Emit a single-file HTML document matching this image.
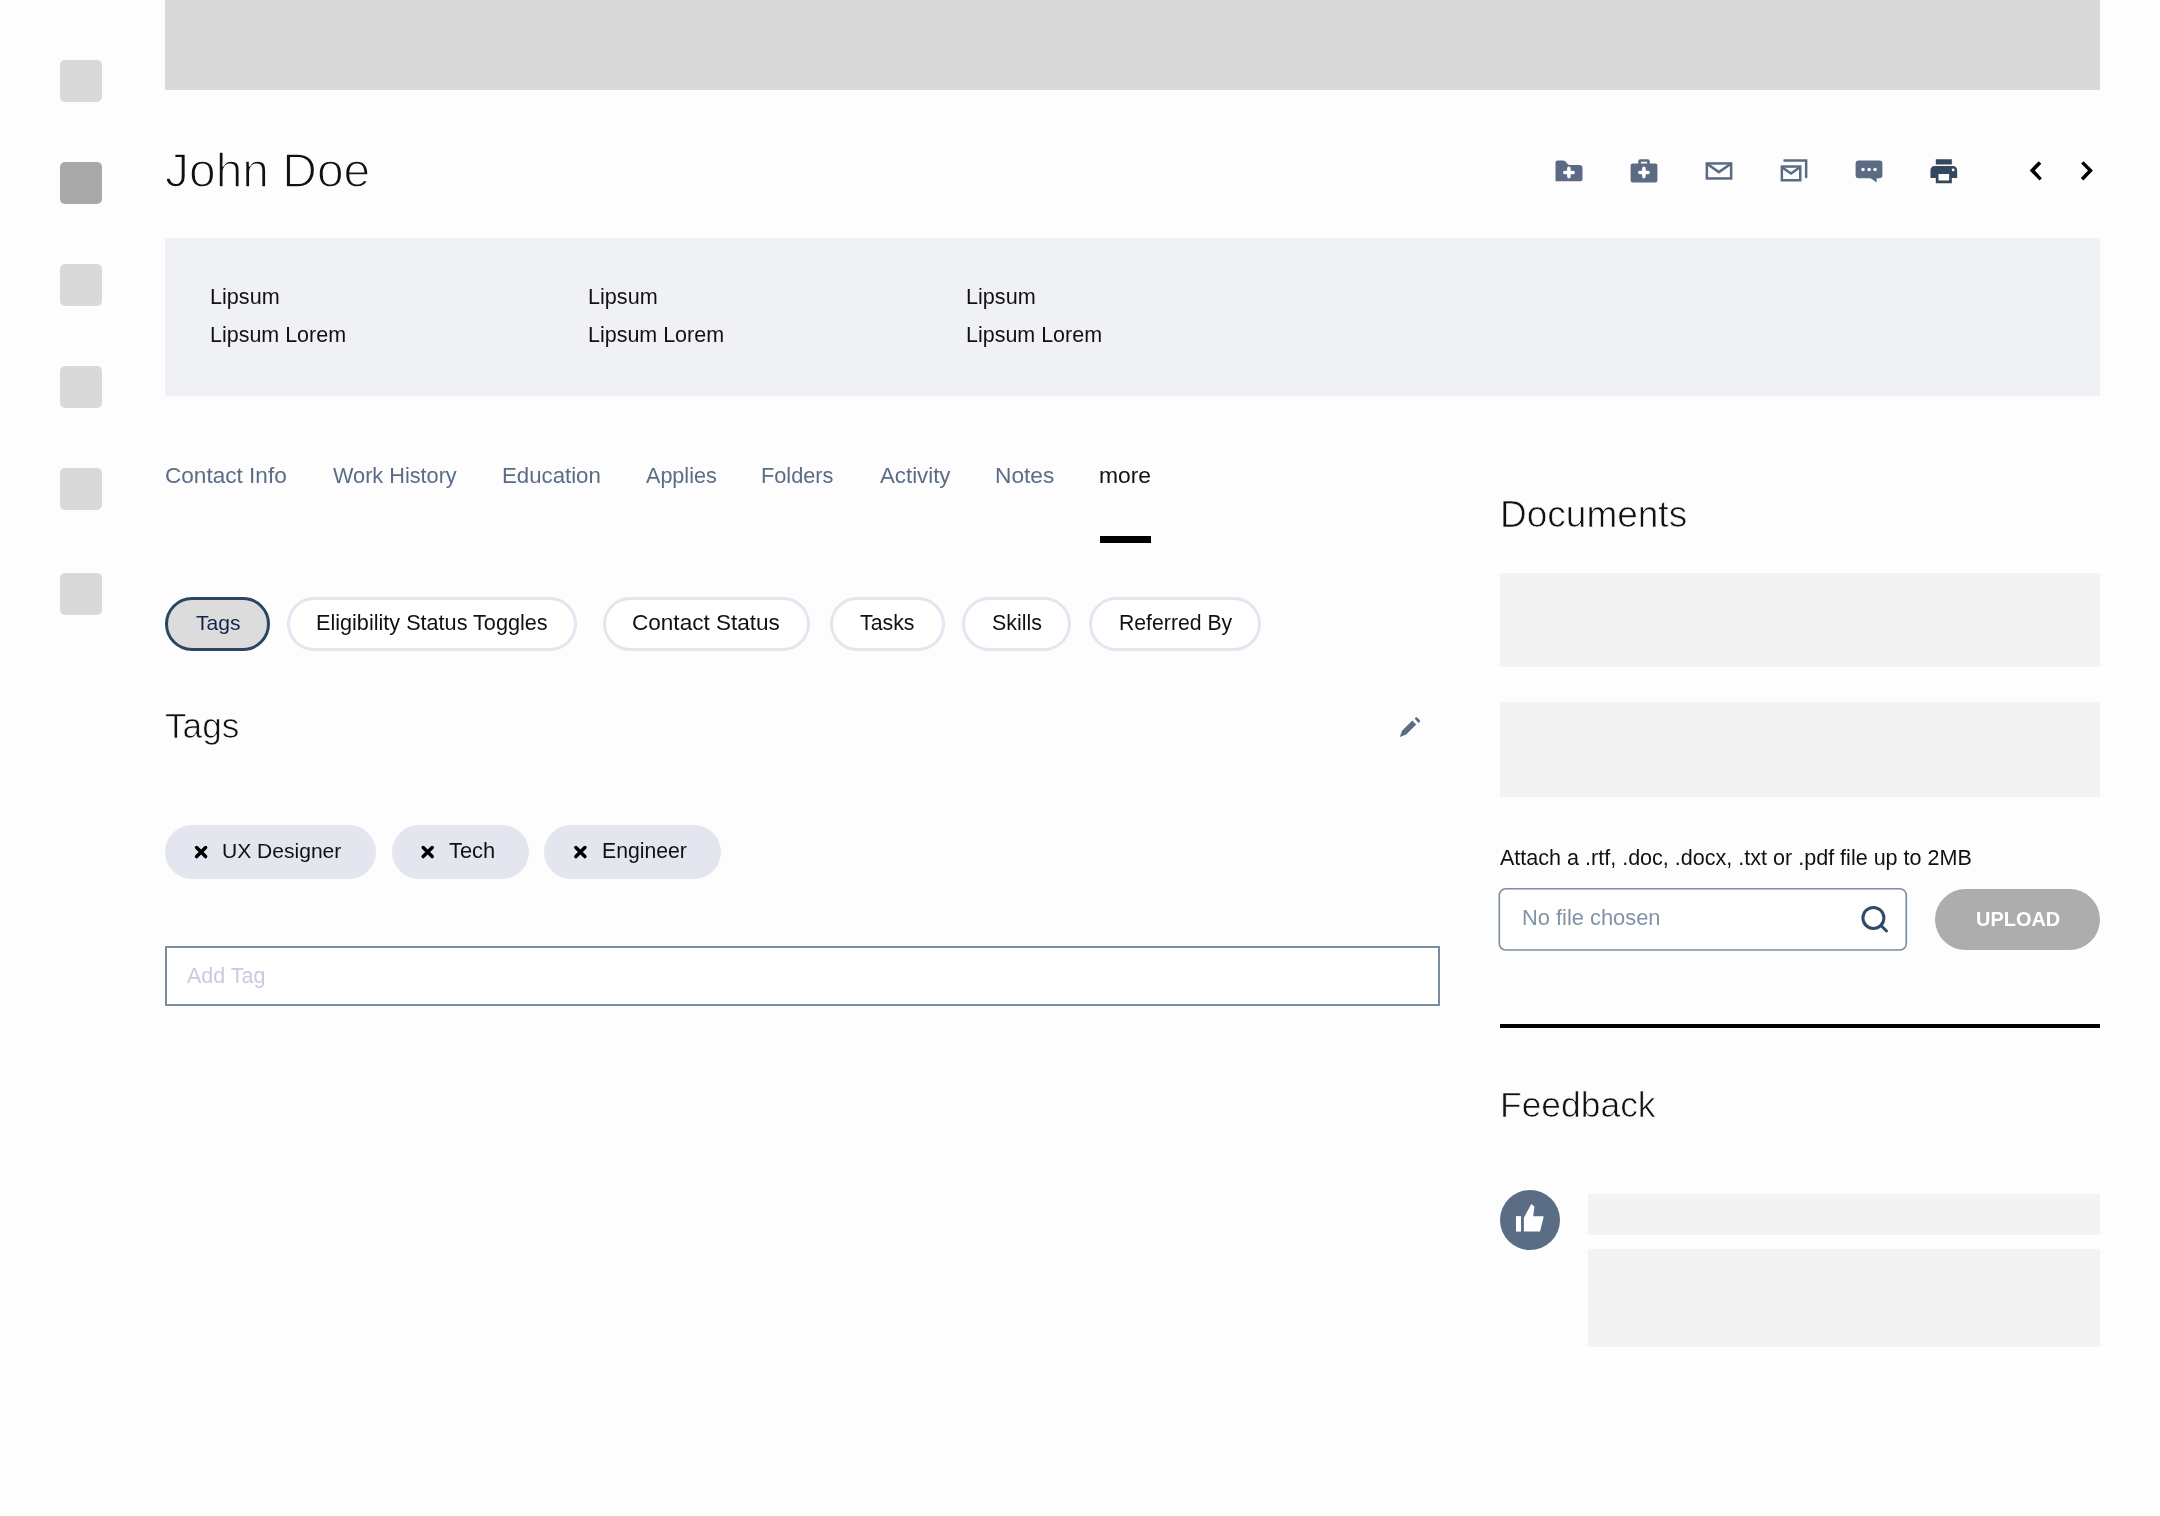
<!DOCTYPE html>
<html>
<head>
<meta charset="utf-8">
<style>
html,body{margin:0;padding:0;}
body{width:2160px;height:1516px;position:relative;overflow:hidden;background:#fdfdfd;font-family:"Liberation Sans",sans-serif;color:#111;}
.a{position:absolute;}
.t{position:absolute;white-space:nowrap;line-height:1;will-change:transform;}
.sq{position:absolute;left:60px;width:42px;height:42px;border-radius:5px;background:#d9d9d9;}
.pill{position:absolute;top:597px;height:54px;box-sizing:border-box;border:3px solid #e2e6ef;border-radius:27px;background:#fff;}
.chip{position:absolute;top:825px;height:54px;border-radius:27px;background:#e3e6ee;}
.gbox{position:absolute;background:#f3f3f3;}
</style>
</head>
<body>
<div class="sq" style="top:60px"></div>
<div class="sq" style="top:162px;background:#a9a9a9"></div>
<div class="sq" style="top:264px"></div>
<div class="sq" style="top:366px"></div>
<div class="sq" style="top:468px"></div>
<div class="sq" style="top:573px"></div>

<div class="a" style="left:165px;top:0;width:1935px;height:90px;background:#d9d9d9"></div>

<div class="a" style="left:165px;top:238px;width:1935px;height:158px;background:#f0f1f4"></div>

<div class="a" style="left:1099.5px;top:535.5px;width:51px;height:7px;background:#000"></div>

<div class="pill" style="left:165px;width:105px;background:#dcdcdc;border-color:#2c4562;"></div>
<div class="pill" style="left:287px;width:290px"></div>
<div class="pill" style="left:603px;width:207px"></div>
<div class="pill" style="left:830px;width:115px"></div>
<div class="pill" style="left:962px;width:109px"></div>
<div class="pill" style="left:1089px;width:172px"></div>

<div class="chip" style="left:165px;width:211px"></div>
<div class="chip" style="left:392px;width:137px"></div>
<div class="chip" style="left:544px;width:177px"></div>

<div class="a" style="left:165px;top:946px;width:1275px;height:60px;box-sizing:border-box;border:2px solid #7b8c9e;background:#fff"></div>

<div class="gbox" style="left:1500px;top:573px;width:600px;height:94px"></div>
<div class="gbox" style="left:1500px;top:702px;width:600px;height:95px"></div>
<svg class="a" style="left:1490px;top:880px" width="430" height="80"><rect x="9.3" y="8.8" width="407" height="61.2" rx="6.5" fill="#fff" stroke="#7a8ba0" stroke-width="1.6"/></svg>
<div class="a" style="left:1935px;top:889px;width:165px;height:61px;border-radius:30.5px;background:#adadad"></div>
<div class="a" style="left:1500px;top:1024px;width:600px;height:4px;background:#000"></div>

<div class="a" style="left:1500px;top:1189.5px;width:60px;height:60px;border-radius:50%;background:#5b6d84"></div>
<div class="gbox" style="left:1588px;top:1194px;width:512px;height:41px"></div>
<div class="gbox" style="left:1588px;top:1249px;width:512px;height:98px"></div>

<div class="t" style="left:165.34px;top:146.64px;font-size:47.95px;-webkit-text-stroke:1.4px #fdfdfd">John Doe</div>
<div class="t" style="left:210.27px;top:286.02px;font-size:21.62px">Lipsum</div>
<div class="t" style="left:210.28px;top:325.05px;font-size:21.47px">Lipsum Lorem</div>
<div class="t" style="left:588.27px;top:286.02px;font-size:21.62px">Lipsum</div>
<div class="t" style="left:588.28px;top:325.05px;font-size:21.47px">Lipsum Lorem</div>
<div class="t" style="left:966.27px;top:286.02px;font-size:21.62px">Lipsum</div>
<div class="t" style="left:966.28px;top:325.05px;font-size:21.47px">Lipsum Lorem</div>
<div class="t" style="left:164.67px;top:465.11px;font-size:22.58px;color:#5a6d84">Contact Info</div>
<div class="t" style="left:333.38px;top:464.86px;font-size:21.7px;color:#5a6d84">Work History</div>
<div class="t" style="left:501.62px;top:465.4px;font-size:22.23px;color:#5a6d84">Education</div>
<div class="t" style="left:645.7px;top:465.47px;font-size:21.57px;color:#5a6d84">Applies</div>
<div class="t" style="left:761.46px;top:464.82px;font-size:21.74px;color:#5a6d84">Folders</div>
<div class="t" style="left:880.0px;top:465.39px;font-size:22.25px;color:#5a6d84">Activity</div>
<div class="t" style="left:995.38px;top:463.99px;font-size:22.72px;color:#5a6d84">Notes</div>
<div class="t" style="left:1098.7px;top:463.86px;font-size:22.87px;color:#111">more</div>
<div class="t" style="left:195.58px;top:612.09px;font-size:21.07px;color:#10264a">Tags</div>
<div class="t" style="left:316.47px;top:611.61px;font-size:21.64px;">Eligibility Status Toggles</div>
<div class="t" style="left:631.97px;top:611.83px;font-size:22.55px;">Contact Status</div>
<div class="t" style="left:860.17px;top:612.88px;font-size:21.32px;">Tasks</div>
<div class="t" style="left:991.73px;top:612.83px;font-size:21.38px;">Skills</div>
<div class="t" style="left:1118.5px;top:611.96px;font-size:21.22px;">Referred By</div>
<div class="t" style="left:164.7px;top:707.79px;font-size:35.19px;-webkit-text-stroke:0.7px #fdfdfd">Tags</div>
<div class="t" style="left:221.52px;top:840.2px;font-size:21.06px;">UX Designer</div>
<div class="t" style="left:448.76px;top:839.51px;font-size:21.87px;">Tech</div>
<div class="t" style="left:601.7px;top:840.08px;font-size:21.2px;">Engineer</div>
<div class="t" style="left:187.4px;top:965.54px;font-size:21.48px;color:#c6cce0">Add Tag</div>
<div class="t" style="left:1500.14px;top:496.05px;font-size:37.0px;-webkit-text-stroke:0.7px #fdfdfd">Documents</div>
<div class="t" style="left:1500.4px;top:847.17px;font-size:21.56px;">Attach a .rtf, .doc, .docx, .txt or .pdf file up to 2MB</div>
<div class="t" style="left:1522.15px;top:906.81px;font-size:21.87px;color:#8193a8">No file chosen</div>
<div class="t" style="left:1975.5px;top:909.64px;font-size:19.95px;color:#fff;font-weight:bold">UPLOAD</div>
<div class="t" style="left:1500.27px;top:1088.28px;font-size:35.43px;-webkit-text-stroke:0.7px #fdfdfd">Feedback</div>


<svg class="a" style="left:0;top:0" width="2160" height="1516" viewBox="0 0 2160 1516">
<!-- folder plus -->
<path fill="#5a6b83" d="M1557.5,160.5 H1563 Q1565,160.5 1566.3,162.3 L1567.3,163.7 Q1568.3,165 1570,165 H1579.5 Q1582.5,165 1582.5,168 V179.2 Q1582.5,181.2 1580.5,181.2 H1555.5 V162.5 Q1555.5,160.5 1557.5,160.5 Z"/>
<path stroke="#fff" stroke-width="3.6" stroke-linecap="round" fill="none" d="M1564.8,172.5 H1573.1 M1568.9,168.4 V176.6"/>
<!-- briefcase plus -->
<path fill="#5a6b83" fill-rule="evenodd" d="M1632.6,163.4 H1638.2 V161.3 Q1638.2,159.3 1640.2,159.3 H1647.8 Q1649.8,159.3 1649.8,161.3 V163.4 H1655.4 Q1657.4,163.4 1657.4,165.4 V180.6 Q1657.4,182.6 1655.4,182.6 H1632.6 Q1630.6,182.6 1630.6,180.6 V165.4 Q1630.6,163.4 1632.6,163.4 Z M1640.9,161.8 V163.4 H1647.1 V161.8 Z"/>
<path stroke="#fff" stroke-width="3.6" stroke-linecap="round" fill="none" d="M1639.8,172.5 H1648.1 M1643.9,168.4 V176.6"/>
<!-- mail -->
<rect x="1706.85" y="163.45" width="24.3" height="15" fill="none" stroke="#5a6b83" stroke-width="2.5"/>
<polyline points="1707,163.8 1718.9,172.1 1731,163.8" fill="none" stroke="#5a6b83" stroke-width="2.6"/>
<!-- mass mail -->
<rect x="1781.85" y="166.55" width="18.4" height="13.7" fill="none" stroke="#5a6b83" stroke-width="2.5"/>
<polyline points="1782,167.2 1791,173.5 1800,167.2" fill="none" stroke="#5a6b83" stroke-width="2.6"/>
<path d="M1784.5,160.45 H1806.15 V177" fill="none" stroke="#5a6b83" stroke-width="2.5" stroke-linecap="round"/>
<!-- chat -->
<path fill="#5a6b83" d="M1858.6,160.5 H1879.4 Q1882.4,160.5 1882.4,163.5 V175.2 Q1882.4,178.2 1879.4,178.2 H1876.7 L1876.6,182.6 L1870.6,178.2 H1858.6 Q1855.6,178.2 1855.6,175.2 V163.5 Q1855.6,160.5 1858.6,160.5 Z"/>
<circle cx="1863" cy="169.5" r="1.75" fill="#fff"/>
<circle cx="1869.1" cy="169.5" r="1.75" fill="#fff"/>
<circle cx="1875" cy="169.5" r="1.75" fill="#fff"/>
<!-- printer (material print) -->
<g transform="translate(1927.8,155.2) scale(1.335)">
<path fill="#33475f" d="M19 8H5c-1.66 0-3 1.34-3 3v6h4v4h12v-4h4v-6c0-1.66-1.34-3-3-3zm-3 11H8v-5h8v5zm3-7c-.55 0-1-.45-1-1s.45-1 1-1 1 .45 1 1-.45 1-1 1zm-1-9H6v4h12V3z"/>
</g>
<!-- chevrons -->
<path fill="#000" d="M2038.7,161.2 L2041.3,163.8 L2034.8,170.5 L2041.9,178.2 L2039.5,180.6 L2029.7,170.5 Z"/>
<path fill="#000" d="M2083.6,161.2 L2081.1,163.6 L2088,170.5 L2080.8,178.1 L2083.4,180.6 L2092.9,170.5 Z"/>
<!-- pencil -->
<path fill="#5a6b83" d="M1399.8,737 L1402.1,730.7 L1412.3,720.6 L1416.2,724.5 L1406.2,734.6 Z"/>
<path fill="#5a6b83" d="M1414.6,718.6 L1415.6,717.6 Q1416.4,716.8 1417.2,717.6 L1419.8,720.2 Q1420.6,721 1419.8,721.8 L1418.6,723 Z"/>
<!-- chip x icons -->
<g stroke="#000" stroke-width="3.5" stroke-linecap="round">
<path d="M196.6,847.6 L205.6,856.6 M205.6,847.6 L196.6,856.6"/>
<path d="M423.2,847.6 L432.2,856.6 M432.2,847.6 L423.2,856.6"/>
<path d="M575.9,847.6 L584.9,856.6 M584.9,847.6 L575.9,856.6"/>
</g>
<!-- search icon -->
<circle cx="1873.4" cy="917.9" r="10.5" fill="none" stroke="#2f4a6a" stroke-width="3"/>
<path d="M1881.5,926 L1886.5,931" stroke="#2f4a6a" stroke-width="3" stroke-linecap="round"/>
<!-- thumbs up -->
<path fill="#fff" d="M1516,1216.1 H1521 V1231.6 H1516 Z"/>
<path fill="#fff" d="M1523.9,1217.7 L1531.3,1204 L1534.4,1206.6 L1533.2,1216.3 H1543.5 V1217.7 L1540,1231.6 H1523.9 Z"/>
</svg>
</body>
</html>
